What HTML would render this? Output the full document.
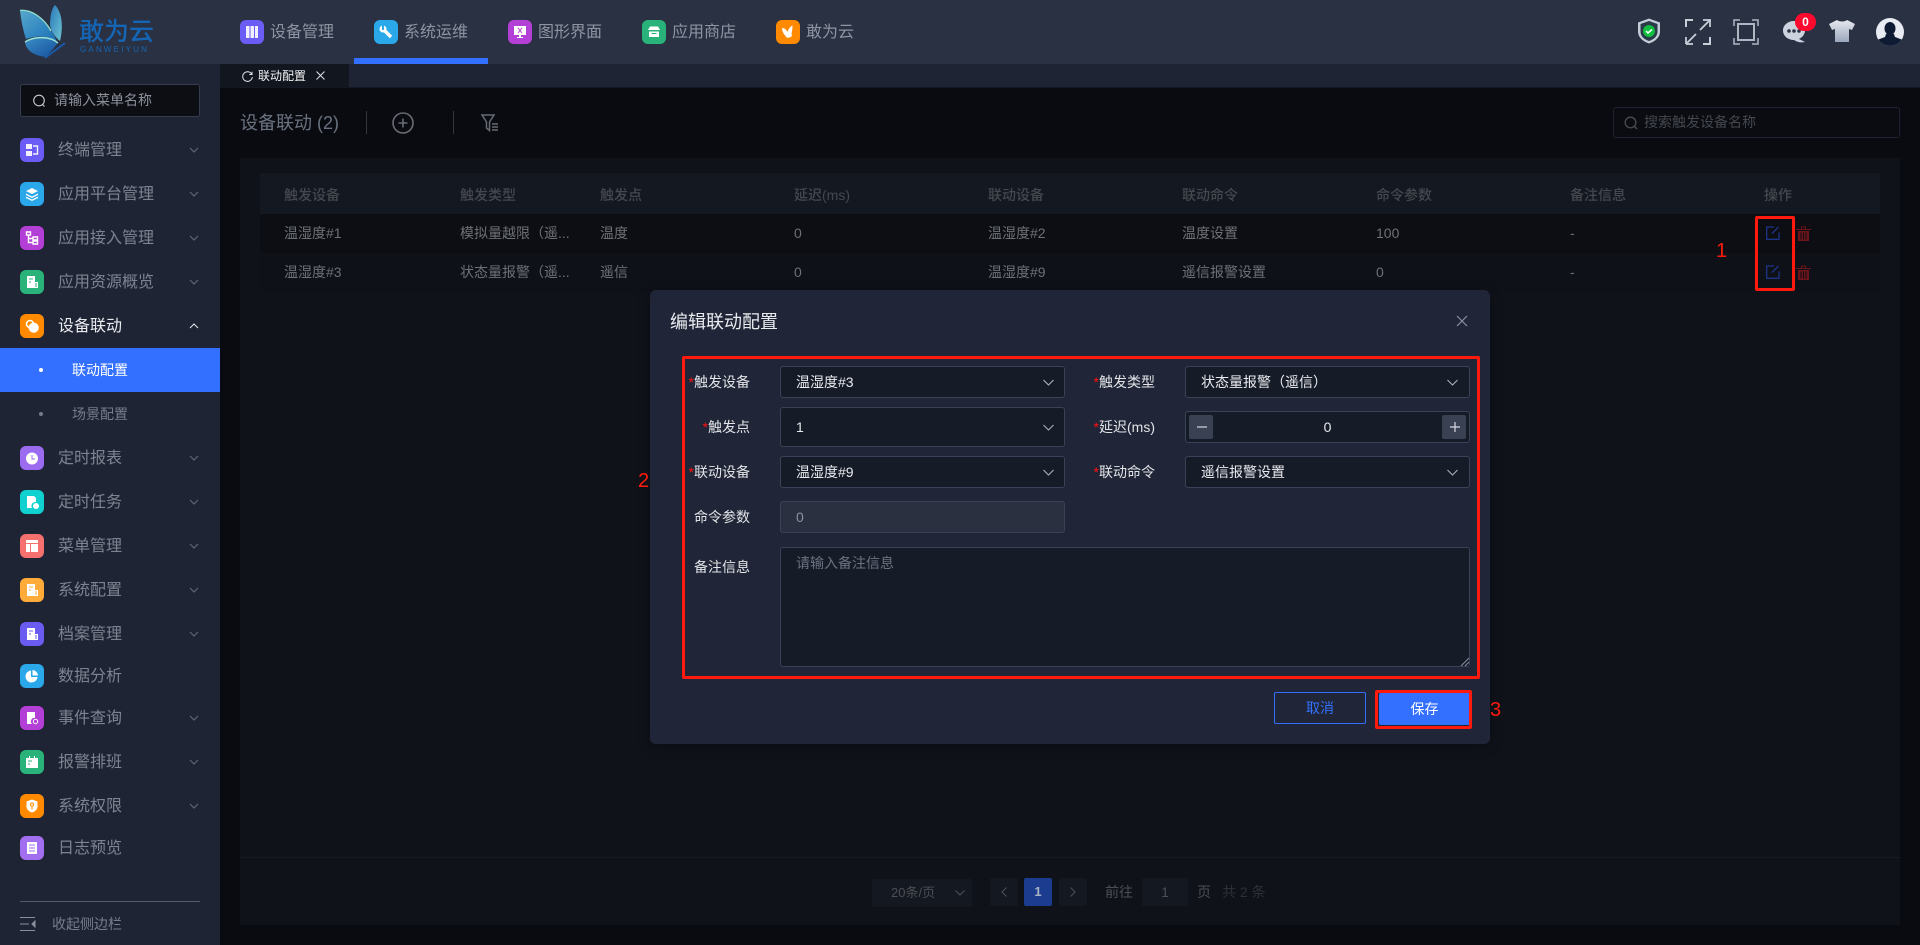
<!DOCTYPE html>
<html lang="zh-CN"><head><meta charset="utf-8"><title>设备联动</title>
<style>
*{box-sizing:border-box}
html,body{margin:0;padding:0;width:1920px;height:945px;overflow:hidden;background:#090b10;font-family:"Liberation Sans","Noto Sans CJK SC",sans-serif;font-size:14px}
.a,.t{position:absolute}
.t{white-space:nowrap;line-height:20px}
svg{position:absolute;overflow:visible}
.ic{position:absolute;left:20px;width:24px;height:24px;border-radius:6px}
.ic svg{left:5px;top:5px;width:14px;height:14px}
.mi{position:absolute;left:58px;font-size:16px;line-height:24px;color:#7d8391;white-space:nowrap;margin-top:1px}
.ch{position:absolute;left:188px;width:12px;height:7px}
.ti{position:absolute;top:20px;width:24px;height:24px;border-radius:6px}
.ti svg{left:5px;top:5px;width:14px;height:14px}
.nt{position:absolute;top:21px;font-size:16px;line-height:24px;color:#8e94a2;white-space:nowrap}
.h{position:absolute;top:185px;color:#45484f;font-weight:500;line-height:20px;white-space:nowrap}
.c{position:absolute;color:#6d7076;line-height:20px;white-space:nowrap}
.lb{position:absolute;color:#e2e4e8;line-height:20px;text-align:right;white-space:nowrap}
.lb i{color:#ff1111;font-style:normal}
.in{position:absolute;background:#161b28;border:1px solid #3a4258;border-radius:3px;color:#e8eaee;line-height:30px;padding-left:15px;white-space:nowrap}
.rb{position:absolute;border:3px solid #ff1a0d;border-radius:2px}
.rn{position:absolute;color:#ff1a0d;font-size:20px;line-height:24px}
</style></head><body>

<!-- main area -->
<div class="a" style="left:220px;top:88px;width:1700px;height:857px;background:#090b10"></div>
<div class="a" style="left:240px;top:158px;width:1660px;height:767px;background:#0f1219"></div>
<div class="a" style="left:260px;top:173px;width:1620px;height:41px;background:#141820"></div>
<div class="a" style="left:260px;top:214px;width:1620px;height:39px;background:#0c0e13"></div>
<div class="a" style="left:260px;top:253px;width:1620px;height:39px;background:#0e1118"></div>

<div class="t" style="left:240px;top:111px;font-size:18px;line-height:24px;color:#6a7280">设备联动 (2)</div>
<div class="a" style="left:366px;top:111px;width:1px;height:23px;background:#33363e"></div>
<svg style="left:392px;top:112px" width="22" height="22" viewBox="0 0 22 22" fill="none" stroke="#676b74" stroke-width="1.6"><circle cx="11" cy="11" r="10"/><path d="M11 6.500v9M6.500 11h9"/></svg>
<div class="a" style="left:453px;top:111px;width:1px;height:23px;background:#33363e"></div>
<svg style="left:481px;top:114px" width="18" height="18" viewBox="0 0 18 18" fill="none" stroke="#676b74" stroke-width="1.5"><path d="M1 1h12L8.500 8v8.500L5.500 14V8z"/><path d="M11 10h6M11 13h6M11 16h6"/></svg>

<div class="a" style="left:1613px;top:107px;width:287px;height:31px;border:1px solid #1f2331;border-radius:3px;background:#0a0c12"></div>
<svg style="left:1624px;top:116px" width="14" height="14" viewBox="0 0 14 14" fill="none" stroke="#4a4d55" stroke-width="1.3"><circle cx="6.500" cy="6.500" r="5.300"/><path d="M10.500 10.500l2.500 2.500"/></svg>
<div class="t" style="left:1644px;top:112px;color:#44474e">搜索触发设备名称</div>

<!-- table -->
<div class="h" style="left:284px">触发设备</div><div class="h" style="left:460px">触发类型</div><div class="h" style="left:600px">触发点</div><div class="h" style="left:794px">延迟(ms)</div><div class="h" style="left:988px">联动设备</div><div class="h" style="left:1182px">联动命令</div><div class="h" style="left:1376px">命令参数</div><div class="h" style="left:1570px">备注信息</div><div class="h" style="left:1764px">操作</div>
<div class="c" style="left:284px;top:223px">温湿度#1</div><div class="c" style="left:460px;top:223px">模拟量越限（遥...</div><div class="c" style="left:600px;top:223px">温度</div><div class="c" style="left:794px;top:223px">0</div><div class="c" style="left:988px;top:223px">温湿度#2</div><div class="c" style="left:1182px;top:223px">温度设置</div><div class="c" style="left:1376px;top:223px">100</div><div class="c" style="left:1570px;top:223px">-</div>
<div class="c" style="left:284px;top:262px">温湿度#3</div><div class="c" style="left:460px;top:262px">状态量报警（遥...</div><div class="c" style="left:600px;top:262px">遥信</div><div class="c" style="left:794px;top:262px">0</div><div class="c" style="left:988px;top:262px">温湿度#9</div><div class="c" style="left:1182px;top:262px">遥信报警设置</div><div class="c" style="left:1376px;top:262px">0</div><div class="c" style="left:1570px;top:262px">-</div>

<svg style="left:1766px;top:226px" width="14" height="14" viewBox="0 0 14 14" fill="none" stroke="#1d3487" stroke-width="1.3"><path d="M8 1H.7v12.300H13V6.500"/><path d="M12.500 1L6 7.500"/></svg>
<svg style="left:1766px;top:265px" width="14" height="14" viewBox="0 0 14 14" fill="none" stroke="#1d3487" stroke-width="1.3"><path d="M8 1H.7v12.300H13V6.500"/><path d="M12.500 1L6 7.500"/></svg>
<svg style="left:1796px;top:226px" width="15" height="15" viewBox="0 0 15 15" fill="#6b1419"><path d="M0 3h15v1H0zM5 .5h5V3H9V1.500H6V3H5zM2 5h11v10H2zM4.500 6.500v7h1v-7zm2.500 0v7h1v-7zm2.500 0v7h1v-7z" fill-rule="evenodd"/></svg>
<svg style="left:1796px;top:265px" width="15" height="15" viewBox="0 0 15 15" fill="#6b1419"><path d="M0 3h15v1H0zM5 .5h5V3H9V1.500H6V3H5zM2 5h11v10H2zM4.500 6.500v7h1v-7zm2.500 0v7h1v-7zm2.500 0v7h1v-7z" fill-rule="evenodd"/></svg>
<div class="rb" style="left:1755px;top:216px;width:40px;height:75px"></div>
<div class="rn" style="left:1716px;top:239px">1</div>

<!-- pagination -->
<div class="a" style="left:240px;top:857px;width:1660px;height:1px;background:#181b23"></div>
<div class="a" style="left:872px;top:879px;width:100px;height:28px;background:#141820;border-radius:2px"></div>
<div class="t" style="left:891px;top:883px;color:#4c4e54;font-size:13px">20条/页</div>
<svg style="left:955px;top:890px" width="10" height="6" viewBox="0 0 10 6" fill="none" stroke="#4c4e54" stroke-width="1.100"><path d="M.5.500l4.500 4.500 4.500-4.500"/></svg>
<div class="a" style="left:990px;top:878px;width:28px;height:28px;background:#141820;border-radius:2px"></div>
<svg style="left:1001px;top:887px" width="6" height="10" viewBox="0 0 6 10" fill="none" stroke="#4c4e54" stroke-width="1.100"><path d="M5.500.5L1 5l4.500 4.500"/></svg>
<div class="a" style="left:1024px;top:878px;width:28px;height:28px;background:#1c3d8f;border-radius:2px;color:#a9b3c6;font-weight:700;line-height:28px;text-align:center;font-size:13px">1</div>
<div class="a" style="left:1059px;top:878px;width:28px;height:28px;background:#141820;border-radius:2px"></div>
<svg style="left:1070px;top:887px" width="6" height="10" viewBox="0 0 6 10" fill="none" stroke="#4c4e54" stroke-width="1.100"><path d="M.5.500L5 5 .5 9.500"/></svg>
<div class="t" style="left:1105px;top:882px;color:#4c4e54">前往</div>
<div class="a" style="left:1142px;top:878px;width:46px;height:28px;background:#141820;border-radius:2px;color:#4c4e54;line-height:28px;text-align:center">1</div>
<div class="t" style="left:1197px;top:882px;color:#4c4e54">页</div>
<div class="t" style="left:1222px;top:882px;color:#2e3037">共 2 条</div>

<!-- top bar -->
<div class="a" style="left:0;top:0;width:1920px;height:64px;background:#2a3142"></div>
<div class="a" style="left:220px;top:64px;width:1700px;height:23px;background:#1e2433"></div>
<div class="a" style="left:220px;top:87px;width:1700px;height:1px;background:#141822"></div>
<div class="a" style="left:220px;top:64px;width:129px;height:23px;background:#12161f"></div>
<svg style="left:242px;top:71px" width="11" height="11" viewBox="0 0 11 11" fill="none" stroke="#e4e6ea" stroke-width="1"><path d="M9.700 3.200A4.800 4.800 0 1 0 10.300 6"/><path d="M10 .8v2.700H7.300"/></svg>
<div class="t" style="left:258px;top:66px;font-size:12px;color:#f2f3f5">联动配置</div>
<svg style="left:316px;top:71px" width="9" height="9" viewBox="0 0 9 9" stroke="#dfe2e6" stroke-width="1"><path d="M.5.500l8 8M8.500.5l-8 8"/></svg>

<!-- logo -->
<svg style="left:20px;top:0" width="48" height="60" viewBox="0 0 48 60">
<defs><linearGradient id="g1" x1="0" y1="0" x2="1" y2="1"><stop offset="0" stop-color="#58a8cc"/><stop offset=".6" stop-color="#2f86c0"/><stop offset="1" stop-color="#1f6cb4"/></linearGradient>
<linearGradient id="g2" x1="0" y1="0" x2="1" y2="1"><stop offset="0" stop-color="#2a78bc"/><stop offset="1" stop-color="#6cc4d0"/></linearGradient>
<linearGradient id="g4" x1="0" y1="0" x2="1" y2="1"><stop offset="0" stop-color="#3a8ec4"/><stop offset="1" stop-color="#154f9e"/></linearGradient></defs>
<path d="M35 5c6 6 9 19 5 36-5-4-9-9-10-16C30 15 32 8 35 5z" fill="url(#g2)"/>
<path d="M0 10.500C11 9 24 18 31 31c3 4 5 8 6 11-7-6-20-7-31-3C3 30 1 20 0 10.500z" fill="url(#g1)"/>
<path d="M0 10.500C11 9 24 18 31 31" fill="none" stroke="#8ed8c8" stroke-width="1.400"/>
<path d="M5 42c9-6 25-6 33 1l-12 14C15 56 6 51 5 42z" fill="url(#g4)"/>
<path d="M5 42c9-6 25-6 33 1" fill="none" stroke="#9ee4d4" stroke-width="1.400"/>
<path d="M25 58L45 43" stroke="#1a5aa8" stroke-width="2"/>
</svg>
<div class="t" style="left:79px;top:19px;font-size:25px;line-height:26px;font-weight:500;color:#1565b5">敢为云</div>
<div class="t" style="left:80px;top:45px;font-size:8px;line-height:10px;color:#1565b5;letter-spacing:2.200px">GANWEIYUN</div>

<!-- top nav -->
<div class="a" style="left:354px;top:58px;width:134px;height:6px;background:#3370ff"></div>
<div class="ti" style="left:240px;background:#6a5cf5"><svg viewBox="0 0 14 14" fill="#f0eeff"><path d="M1 1h3.500v12H1zM5.500 1H9v12H5.500zM10 1h3v12h-3z"/></svg></div><div class="nt" style="left:270px">设备管理</div>
<div class="ti" style="left:374px;background:#2ba8ea"><svg viewBox="0 0 14 14" fill="none" stroke="#fff"><path d="M5 5l7 7" stroke-width="3.400"/><circle cx="4" cy="4" r="2.300" stroke-width="2.400"/><path d="M4 .5v3.500" stroke="#2ba8ea" stroke-width="2"/></svg></div><div class="nt" style="left:404px">系统运维</div>
<div class="ti" style="left:508px;background:#b43fd6"><svg viewBox="0 0 14 14" fill="#fff"><path d="M1 1h12v9H8v2h2v1H4v-1h2v-2H1z"/><path d="M5 3l4 5M9 3L5 8" stroke="#b43fd6"/></svg></div><div class="nt" style="left:538px">图形界面</div>
<div class="ti" style="left:642px;background:#2ab27b"><svg viewBox="0 0 14 14" fill="#fff"><path d="M3 1.500h8l2 3.500H1zM2 6.500h10V12H2z"/><path d="M4.500 8.500h5" stroke="#2ab27b"/></svg></div><div class="nt" style="left:672px">应用商店</div>
<div class="ti" style="left:776px;background:#ff8a00"><svg viewBox="0 0 14 14" fill="#fff"><path d="M1 3c3 0 4.500 2 5.500 4 .5-2 2-5 5-6.500 0 4-.5 6-1 8 .5 1 .5 2 0 3-1.500 1-3 1.500-5 1-1-2-4.500-4.500-4.500-9.500z"/></svg></div><div class="nt" style="left:806px">敢为云</div>

<!-- top right -->
<svg style="left:1637px;top:18px" width="24" height="26" viewBox="0 0 24 26"><path d="M12 .5l11 4v9c0 6-5 10-11 12C6 23.500 1 19.500 1 13.500v-9z" fill="#c4ccd8"/><path d="M12 3l8.500 3v7.500c0 5-4 8-8.500 9.500-4.500-1.500-8.500-4.500-8.500-9.500V6z" fill="#2a3a48"/><circle cx="12" cy="13" r="6" fill="#12c040"/><path d="M9 13l2 2 4-3.500" stroke="#fff" stroke-width="1.500" fill="none"/></svg>
<svg style="left:1685px;top:19px" width="26" height="26" viewBox="0 0 26 26" fill="none" stroke="#c8ced8" stroke-width="2"><path d="M1 8V1h7M25 18v7h-7" /><path d="M1 18v7M1 25h7M18 1h7v7" stroke="#b5bcc8"/><path d="M25 1L15 11M1 25l10-10" stroke-width="1.800"/></svg>
<svg style="left:1733px;top:19px" width="26" height="26" viewBox="0 0 26 26" fill="none" stroke="#aeb6c1" stroke-width="2"><path d="M5 5h16v16H5z"/><path d="M1 7V1h6M19 1h6v6M1 19v6h6M25 19v6h-6" stroke-width="1.500"/></svg>
<svg style="left:1783px;top:21px" width="23" height="23" viewBox="0 0 23 23"><path d="M11 0c6 0 11 4 11 9.500 0 4-3 7-6 8.500l6 3c-4 1-8 0-11-2C5 19 0 15 0 9.500 0 4 5 0 11 0z" fill="#ccd2de"/><circle cx="6" cy="10" r="1.800" fill="#2a3142"/><circle cx="11" cy="10" r="1.800" fill="#2a3142"/><circle cx="16" cy="10" r="1.800" fill="#2a3142"/></svg>
<div class="a" style="left:1795px;top:13px;width:21px;height:18px;border-radius:9px;background:#ff0a2e;color:#fff;text-align:center;font-size:12px;font-weight:700;line-height:18px">0</div>
<svg style="left:1829px;top:20px" width="26" height="22" viewBox="0 0 26 22"><defs><linearGradient id="g3" x1="0" y1="0" x2="0" y2="1"><stop offset="0" stop-color="#e6e9ee"/><stop offset="1" stop-color="#9aa6bc"/></linearGradient></defs><path d="M8 0c2 2 8 2 10 0l8 4-3 6-3-1v13H6V9l-3 1-3-6z" fill="url(#g3)"/></svg>
<svg style="left:1876px;top:18px" width="28" height="28" viewBox="0 0 28 28"><defs><clipPath id="cp"><circle cx="14" cy="14" r="14"/></clipPath></defs><circle cx="14" cy="14" r="14" fill="#e8ecf2"/><g clip-path="url(#cp)" fill="#0f1a33"><ellipse cx="14" cy="10.500" rx="5.500" ry="6.500"/><path d="M10 16h8l1 3 8 3v6H1v-6l8-3z"/></g></svg>

<!-- sidebar -->
<div class="a" style="left:0;top:64px;width:220px;height:881px;background:#1f2434">
<div class="a" style="left:20px;top:20px;width:180px;height:33px;background:#0c0e14;border:1px solid #353c50;border-radius:3px"></div>
<svg style="left:33px;top:30px" width="13" height="14" viewBox="0 0 13 14" fill="none" stroke="#c8ccd2" stroke-width="1.100"><circle cx="6" cy="6.500" r="5.300"/><path d="M9.500 10.500l2 2"/></svg>
<div class="t" style="left:54px;top:26px;color:#8b909a">请输入菜单名称</div>

<div class="a" style="left:0;top:284px;width:220px;height:44px;background:#3370ff"></div>
<div class="a" style="left:39px;top:304px;width:4px;height:4px;border-radius:2px;background:#fff"></div>
<div class="t" style="left:72px;top:296px;color:#fff">联动配置</div>
<div class="a" style="left:39px;top:348px;width:4px;height:4px;border-radius:2px;background:#767c8a"></div>
<div class="t" style="left:72px;top:340px;color:#767c8a">场景配置</div>

<div class="ic" style="top:74px;background:#6a5cf5"><svg viewBox="0 0 14 14" fill="#f2f0ff"><path d="M1 1h6v5H1zM1 8h6v5H1z"/><path d="M8 3h4.500v8H8" fill="none" stroke="#f2f0ff" stroke-width="1.400"/></svg></div><div class="mi" style="top:74px">终端管理</div>
<div class="ic" style="top:118px;background:#2ba8ea"><svg viewBox="0 0 14 14" fill="#fff"><path d="M7 1l6 3-6 3-6-3zM1 6.500l6 3 6-3v1.500l-6 3-6-3zM1 9.500l6 3 6-3v1.500l-6 3-6-3z"/></svg></div><div class="mi" style="top:118px">应用平台管理</div>
<div class="ic" style="top:162px;background:#b43fd6"><svg viewBox="0 0 14 14" fill="none" stroke="#fff" stroke-width="1.400"><path d="M1.500 1h4v3h-4zM8 6h4.500v3H8zM8 10h4.500v3H8zM3.500 4v7.500H8M3.500 7.500H8"/></svg></div><div class="mi" style="top:162px">应用接入管理</div>
<div class="ic" style="top:206px;background:#2ab27b"><svg viewBox="0 0 14 14" fill="#fff"><path d="M2 1h8v12H2zM8 7h5v6H8z"/><path d="M4 4h4M4 7h2M10 9h2M10 11h2" stroke="#2ab27b"/></svg></div><div class="mi" style="top:206px">应用资源概览</div>
<div class="ic" style="top:250px;background:#ff8a00"><svg viewBox="0 0 14 14" fill="none" stroke="#fff" stroke-width="1.600"><circle cx="5" cy="5" r="3.500"/><circle cx="8.700" cy="8.700" r="4.300" fill="#fff"/></svg></div><div class="mi" style="top:250px;color:#e9ebef">设备联动</div>

<div class="ic" style="top:382px;background:#9b6cf0"><svg viewBox="0 0 14 14" fill="#fff"><circle cx="7" cy="7.500" r="6"/><path d="M7 4v4h3" stroke="#9b6cf0" fill="none"/></svg></div><div class="mi" style="top:382px">定时报表</div>
<div class="ic" style="top:426px;background:#10d0d0"><svg viewBox="0 0 14 14" fill="#fff"><path d="M2 1h7l2 2v4a4 4 0 0 0-4 6H2z"/><circle cx="11" cy="11" r="3"/></svg></div><div class="mi" style="top:426px">定时任务</div>
<div class="ic" style="top:470px;background:#f77070"><svg viewBox="0 0 14 14" fill="#fff"><path d="M1 1h12v3H1zM1 5h4v8H1zM6 5h7v8H6z"/></svg></div><div class="mi" style="top:470px">菜单管理</div>
<div class="ic" style="top:514px;background:#ffab3a"><svg viewBox="0 0 14 14" fill="#fff"><path d="M2 1h8v12H2zM8 7h5v6H8z"/><path d="M4 4h4M4 7h2M10 9h2M10 11h2" stroke="#ffab3a"/></svg></div><div class="mi" style="top:514px">系统配置</div>
<div class="ic" style="top:558px;background:#6a5cf0"><svg viewBox="0 0 14 14" fill="#fff"><path d="M2 1h8v12H2zM8 7h5v6H8z"/><path d="M4 4h4M4 7h2M10 9h2M10 11h2" stroke="#6a5cf0"/></svg></div><div class="mi" style="top:558px">档案管理</div>
<div class="ic" style="top:600px;background:#2ba8ea"><svg viewBox="0 0 14 14" fill="#fff"><path d="M6 1.500v6.500h6.500A6 6 0 1 1 6 1.500z"/><path d="M7.500 1a6 6 0 0 1 5.500 5.500H7.500z"/></svg></div><div class="mi" style="top:600px">数据分析</div>
<div class="ic" style="top:642px;background:#b43fd6"><svg viewBox="0 0 14 14" fill="#fff"><path d="M2 1h8v6a3.500 3.500 0 0 0-3 6H2z"/><circle cx="10.500" cy="10.500" r="2.200" fill="none" stroke="#fff"/></svg></div><div class="mi" style="top:642px">事件查询</div>
<div class="ic" style="top:686px;background:#2ab27b"><svg viewBox="0 0 14 14" fill="#fff"><path d="M1 3h3V1h1v2h4V1h1v2h3v10H1z"/><path d="M3 6h4M3 9h2" stroke="#2ab27b"/></svg></div><div class="mi" style="top:686px">报警排班</div>
<div class="ic" style="top:730px;background:#ff8a00"><svg viewBox="0 0 14 14" fill="#fff"><path d="M7 .5l5.500 2v5c0 3-2.500 5-5.500 6-3-1-5.500-3-5.500-6v-5z"/><circle cx="7" cy="5.500" r="1.500" fill="none" stroke="#ff8a00"/><path d="M7 7v3.500" stroke="#ff8a00"/></svg></div><div class="mi" style="top:730px">系统权限</div>
<div class="ic" style="top:772px;background:#a26ff0"><svg viewBox="0 0 14 14" fill="#fff"><path d="M2 1h10v12H2z"/><path d="M4 4h6M4 7h6M4 10h6" stroke="#a26ff0"/></svg></div><div class="mi" style="top:772px">日志预览</div>

<svg class="ch" style="top:83px" viewBox="0 0 12 7" fill="none" stroke="#666c7b" stroke-width="1"><path d="M2 1l4 4 4-4"/></svg>
<svg class="ch" style="top:127px" viewBox="0 0 12 7" fill="none" stroke="#666c7b" stroke-width="1"><path d="M2 1l4 4 4-4"/></svg>
<svg class="ch" style="top:171px" viewBox="0 0 12 7" fill="none" stroke="#666c7b" stroke-width="1"><path d="M2 1l4 4 4-4"/></svg>
<svg class="ch" style="top:215px" viewBox="0 0 12 7" fill="none" stroke="#666c7b" stroke-width="1"><path d="M2 1l4 4 4-4"/></svg>
<svg class="ch" style="top:259px" viewBox="0 0 12 7" fill="none" stroke="#e6e8ec" stroke-width="1"><path d="M2 5l4-4 4 4"/></svg>
<svg class="ch" style="top:391px" viewBox="0 0 12 7" fill="none" stroke="#666c7b" stroke-width="1"><path d="M2 1l4 4 4-4"/></svg>
<svg class="ch" style="top:435px" viewBox="0 0 12 7" fill="none" stroke="#666c7b" stroke-width="1"><path d="M2 1l4 4 4-4"/></svg>
<svg class="ch" style="top:479px" viewBox="0 0 12 7" fill="none" stroke="#666c7b" stroke-width="1"><path d="M2 1l4 4 4-4"/></svg>
<svg class="ch" style="top:523px" viewBox="0 0 12 7" fill="none" stroke="#666c7b" stroke-width="1"><path d="M2 1l4 4 4-4"/></svg>
<svg class="ch" style="top:567px" viewBox="0 0 12 7" fill="none" stroke="#666c7b" stroke-width="1"><path d="M2 1l4 4 4-4"/></svg>
<svg class="ch" style="top:651px" viewBox="0 0 12 7" fill="none" stroke="#666c7b" stroke-width="1"><path d="M2 1l4 4 4-4"/></svg>
<svg class="ch" style="top:695px" viewBox="0 0 12 7" fill="none" stroke="#666c7b" stroke-width="1"><path d="M2 1l4 4 4-4"/></svg>
<svg class="ch" style="top:739px" viewBox="0 0 12 7" fill="none" stroke="#666c7b" stroke-width="1"><path d="M2 1l4 4 4-4"/></svg>

<div class="a" style="left:20px;top:837px;width:180px;height:1px;background:#555b6a"></div>
<svg style="left:20px;top:853px" width="15" height="14" viewBox="0 0 15 14" fill="none" stroke="#8a909c" stroke-width="1"><path d="M0 .5h15M0 7h9M0 13.500h15"/><path d="M15 4v6l-3-3z" fill="#8a909c"/></svg>
<div class="t" style="left:52px;top:850px;color:#767c8a">收起侧边栏</div>
</div>

<!-- modal -->
<div class="a" style="left:650px;top:290px;width:840px;height:454px;background:#202637;border-radius:6px;box-shadow:0 2px 12px rgba(0,0,0,.3)"></div>
<div class="t" style="left:670px;top:310px;font-size:18px;line-height:24px;color:#e9ebef">编辑联动配置</div>
<svg style="left:1457px;top:316px" width="10" height="10" viewBox="0 0 10 10" stroke="#8d95a8" stroke-width="1.100"><path d="M0 0l10 10M10 0L0 10"/></svg>
<div class="rb" style="left:682px;top:356px;width:798px;height:323px"></div>
<div class="rn" style="left:638px;top:469px">2</div>

<div class="lb" style="right:1170px;top:372px"><i>*</i>触发设备</div>
<div class="lb" style="right:1170px;top:417px"><i>*</i>触发点</div>
<div class="lb" style="right:1170px;top:462px"><i>*</i>联动设备</div>
<div class="lb" style="right:1170px;top:507px">命令参数</div>
<div class="lb" style="right:1170px;top:557px">备注信息</div>
<div class="lb" style="right:765px;top:372px"><i>*</i>触发类型</div>
<div class="lb" style="right:765px;top:417px"><i>*</i>延迟(ms)</div>
<div class="lb" style="right:765px;top:462px"><i>*</i>联动命令</div>

<div class="in" style="left:780px;top:366px;width:285px;height:32px">温湿度#3</div>
<div class="in" style="left:780px;top:407px;width:285px;height:40px;line-height:38px">1</div>
<div class="in" style="left:780px;top:456px;width:285px;height:32px">温湿度#9</div>
<div class="in" style="left:780px;top:501px;width:285px;height:32px;background:#2a3040;color:#8c909a">0</div>
<div class="in" style="left:780px;top:547px;width:690px;height:120px;color:#6d7280;line-height:20px;padding-top:5px">请输入备注信息</div>
<div class="in" style="left:1185px;top:366px;width:285px;height:32px">状态量报警（遥信）</div>
<div class="in" style="left:1185px;top:411px;width:285px;height:32px;text-align:center;padding:0">0</div>
<div class="in" style="left:1185px;top:456px;width:285px;height:32px">遥信报警设置</div>
<div class="a" style="left:1189px;top:415px;width:24px;height:24px;background:#3a4153;border-radius:2px"></div>
<svg style="left:1197px;top:426px" width="10" height="2"><path d="M0 1h10" stroke="#d5d9e0" stroke-width="1.200"/></svg>
<div class="a" style="left:1442px;top:415px;width:24px;height:24px;background:#3a4153;border-radius:2px"></div>
<svg style="left:1450px;top:422px" width="10" height="10"><path d="M0 5h10M5 0v10" stroke="#d5d9e0" stroke-width="1.200"/></svg>
<svg style="left:1043px;top:379px" width="11" height="7" viewBox="0 0 11 7" fill="none" stroke="#aab0bc" stroke-width="1.100"><path d="M.5 1l5 5 5-5"/></svg>
<svg style="left:1043px;top:424px" width="11" height="7" viewBox="0 0 11 7" fill="none" stroke="#aab0bc" stroke-width="1.100"><path d="M.5 1l5 5 5-5"/></svg>
<svg style="left:1043px;top:469px" width="11" height="7" viewBox="0 0 11 7" fill="none" stroke="#aab0bc" stroke-width="1.100"><path d="M.5 1l5 5 5-5"/></svg>
<svg style="left:1447px;top:379px" width="11" height="7" viewBox="0 0 11 7" fill="none" stroke="#aab0bc" stroke-width="1.100"><path d="M.5 1l5 5 5-5"/></svg>
<svg style="left:1447px;top:469px" width="11" height="7" viewBox="0 0 11 7" fill="none" stroke="#aab0bc" stroke-width="1.100"><path d="M.5 1l5 5 5-5"/></svg>
<svg style="left:1461px;top:658px" width="8" height="8" viewBox="0 0 8 8" stroke="#8a90a0" stroke-width="1"><path d="M0 8l8-8M4 8l4-4"/></svg>

<div class="a" style="left:1274px;top:692px;width:92px;height:32px;border:1px solid #3370ff;border-radius:2px;color:#3370ff;text-align:center;line-height:30px">取消</div>
<div class="a" style="left:1379px;top:693px;width:91px;height:32px;background:#3370ff;border-radius:2px;color:#fff;text-align:center;line-height:32px">保存</div>
<div class="rb" style="left:1375px;top:690px;width:97px;height:39px"></div>
<div class="rn" style="left:1490px;top:698px">3</div>

</body></html>
